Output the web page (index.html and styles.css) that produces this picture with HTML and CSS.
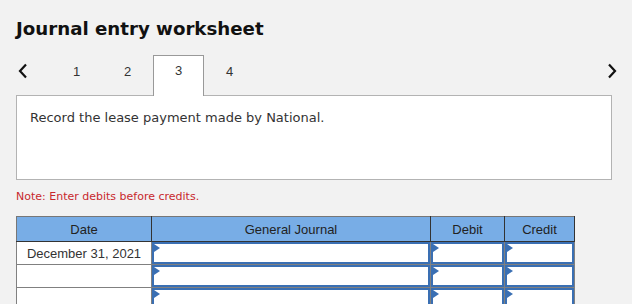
FILE: index.html
```html
<!DOCTYPE html>
<html lang="en">
<head>
  <meta charset="UTF-8">
  <title>Journal entry worksheet</title>
  <link rel="stylesheet" href="styles.css">
</head>
<body>
  <div class="worksheet">
    <h1 class="title">Journal entry worksheet</h1>

    <div class="tabs">
      <span class="nav prev">
        <svg width="10" height="16" viewBox="0 0 10 16"><polyline points="8,1.5 2,8 8,14.5" fill="none" stroke="#111" stroke-width="2.2"/></svg>
      </span>
      <span class="tab">1</span>
      <span class="tab">2</span>
      <span class="tab active">3</span>
      <span class="tab">4</span>
      <span class="nav next">
        <svg width="10" height="16" viewBox="0 0 10 16"><polyline points="2,1.5 8,8 2,14.5" fill="none" stroke="#111" stroke-width="2.2"/></svg>
      </span>
    </div>

    <div class="prompt">
      <p>Record the lease payment made by National.</p>
    </div>

    <p class="note">Note: Enter debits before credits.</p>

    <table class="journal">
      <thead>
        <tr>
          <th class="col-date">Date</th>
          <th class="col-account">General Journal</th>
          <th class="col-debit">Debit</th>
          <th class="col-credit">Credit</th>
        </tr>
      </thead>
      <tbody>
        <tr>
          <td class="date">December 31, 2021</td>
          <td><div class="field"></div></td>
          <td><div class="field"></div></td>
          <td><div class="field"></div></td>
        </tr>
        <tr>
          <td class="date"></td>
          <td><div class="field"></div></td>
          <td><div class="field"></div></td>
          <td><div class="field"></div></td>
        </tr>
        <tr>
          <td class="date"></td>
          <td><div class="field"></div></td>
          <td><div class="field"></div></td>
          <td><div class="field"></div></td>
        </tr>
      </tbody>
    </table>
  </div>
</body>
</html>
```

FILE: styles.css
```css
body {
  margin: 0;
  background-color: #f2f2f2;
  font-family: "DejaVu Sans", Verdana, sans-serif;
  color: #333;
}
.worksheet {
  padding: 0 12px 0 16px;
}
.title {
  margin: 0;
  padding-top: 17px;
  font-size: 18.2px;
  line-height: 24px;
  font-weight: bold;
  color: #111;
}
.tabs {
  display: flex;
  align-items: flex-end;
  height: 40px;
  margin-top: 14px;
}
.nav {
  display: flex;
  align-items: center;
  height: 40px;
  padding-bottom: 8px;
  box-sizing: border-box;
}
.prev {
  width: 35px;
  padding-left: 2px;
}
.next {
  margin-left: auto;
  padding-right: 3px;
}
.tab {
  width: 51px;
  height: 40px;
  box-sizing: border-box;
  display: flex;
  align-items: center;
  justify-content: center;
  font-family: "Liberation Sans", Arial, sans-serif;
  font-size: 13px;
  color: #333;
  padding-bottom: 8px;
}
.tab.active {
  background-color: #fff;
  border: 1px solid #999;
  border-bottom: none;
  position: relative;
  z-index: 1;
  height: 41px;
  margin-bottom: -1px;
  padding-bottom: 11px;
}
.prompt {
  margin-right: 8px;
  height: 85px;
  box-sizing: border-box;
  background-color: #fff;
  border: 1px solid #b3b3b3;
  padding: 14px 13px;
}
.prompt p {
  margin: 0;
  font-size: 13px;
  line-height: 16px;
}
.note {
  margin: 10px 0 0;
  font-size: 11px;
  line-height: 14px;
  color: #c8282d;
}
.journal {
  margin-top: 12px;
  width: 559px;
  border-collapse: collapse;
  font-family: "Liberation Sans", Arial, sans-serif;
  font-size: 13px;
  color: #222;
}
.journal th {
  height: 24px;
  padding: 0;
  font-weight: normal;
  background-color: #78ade6;
  border: 1px solid #333;
  border-top-color: #777;
}
.journal th.col-date {
  border-left-color: #777;
}
.col-date { width: 134px; }
.col-debit { width: 73px; }
.col-credit { width: 69px; }
.journal td {
  height: 22px;
  padding: 0;
  background-color: #fff;
  border: 1px solid #808080;
}
.journal td.date {
  text-align: center;
  color: #333;
}
.field {
  position: relative;
  height: 18px;
  border: 2px solid #3a6fb3;
}
.field::before {
  content: "";
  position: absolute;
  left: 0;
  top: 0;
  border-left: 6px solid #3a6fb3;
  border-top: 4px solid transparent;
  border-bottom: 4px solid transparent;
}
```
